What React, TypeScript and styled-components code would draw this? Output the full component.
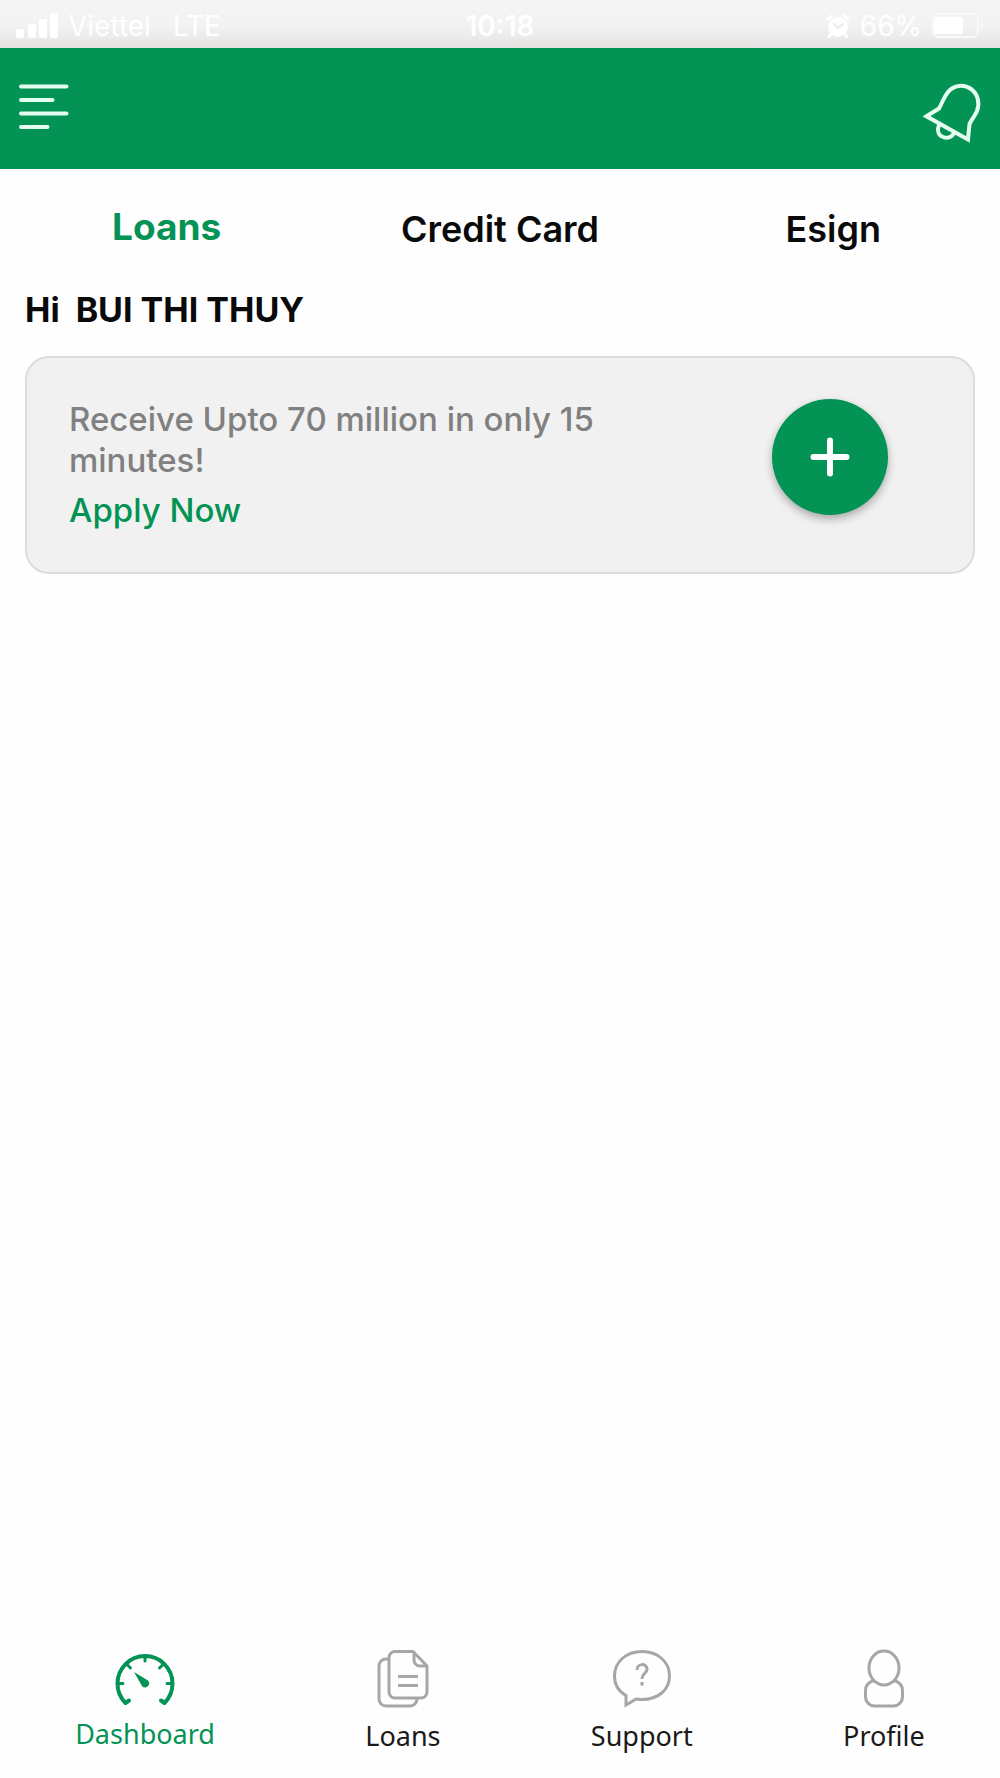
import React from "react";
import styled, { createGlobalStyle } from "styled-components";

const green = "#039355";

const GlobalStyle = createGlobalStyle`
  * { box-sizing: border-box; }
  body {
    margin: 0;
    background: #fefefe;
    font-family: Inter, "Liberation Sans", sans-serif;
  }
  button { font: inherit; border: 0; padding: 0; background: none; cursor: pointer; }
  a { text-decoration: none; }
  svg { display: block; flex: none; }
`;

const Screen = styled.div`
  display: flex;
  flex-direction: column;
  min-height: 100vh;
`;

const StatusBar = styled.div`
  display: grid;
  grid-template-columns: 1fr auto 1fr;
  align-items: center;
  height: 48px;
  padding: 4px 16px 0;
  background: linear-gradient(#f5f5f5 0%, #f2f2f2 55%, #e6e2e2 100%);
  color: #fff;
  font-size: 28px;
  line-height: 32px;
`;

const StatusGroup = styled.div<{ $end?: boolean }>`
  display: flex;
  align-items: center;
  gap: 10px;
  justify-content: ${(p) => (p.$end ? "flex-end" : "flex-start")};
`;

const Network = styled.span`
  padding-left: 12px;
`;

const Clock = styled.time`
  font-weight: 600;
`;

const Header = styled.header`
  display: flex;
  align-items: center;
  justify-content: space-between;
  height: 121px;
  padding: 0 12px;
  background: ${green};
`;

const Tabs = styled.nav`
  display: grid;
  grid-template-columns: repeat(3, 1fr);
  align-items: start;
  padding-top: 36px;
`;

const Tab = styled.a<{ $active?: boolean }>`
  text-align: center;
  line-height: ${(p) => (p.$active ? 44 : 48)}px;
  font-size: ${(p) => (p.$active ? 37 : 36)}px;
  font-weight: ${(p) => (p.$active ? 700 : 600)};
  color: ${(p) => (p.$active ? green : "#0a0a0a")};
`;

const Main = styled.main`
  flex: 1;
  padding: 37px 25px;
`;

const Greeting = styled.h1`
  display: flex;
  gap: 16px;
  margin: 0 0 26px;
  font-size: 34px;
  line-height: 40px;
  font-weight: 700;
  color: #0a0a0a;
`;

const Card = styled.section`
  display: flex;
  align-items: flex-start;
  justify-content: space-between;
  padding: 41px 85px 41px 42px;
  border: 2px solid #dcdcdc;
  border-radius: 24px;
  background: #f1f1f1;
  font-size: 33px;
  line-height: 41px;
  font-weight: 500;
`;

const Offer = styled.div`
  max-width: 560px;
`;

const OfferText = styled.p`
  margin: 0 0 9px;
  color: #808080;
`;

const ApplyLink = styled.a`
  display: block;
  color: ${green};
`;

const AddButton = styled.button`
  display: grid;
  place-items: center;
  width: 116px;
  height: 116px;
  border-radius: 50%;
  background: ${green};
  box-shadow: 0 4px 8px rgba(0, 0, 0, 0.3);
`;

const BottomNav = styled.nav`
  display: flex;
  justify-content: space-around;
  padding-bottom: 22px;
`;

const NavItem = styled.a<{ $active?: boolean }>`
  display: flex;
  flex-direction: column;
  align-items: center;
  gap: ${(p) => (p.$active ? 6 : 8)}px;
  font-family: "Noto Sans", "Open Sans", sans-serif;
  font-size: 27px;
  line-height: 40px;
  color: ${(p) => (p.$active ? green : "#1a1a1a")};
`;

const SignalIcon = () => (
  <svg width="42" height="26" viewBox="0 0 42 26" fill="#fff" aria-hidden="true">
    <rect x="0" y="16" width="8" height="9" rx="2" />
    <rect x="12" y="11" width="8" height="14" rx="2" />
    <rect x="23" y="6" width="8" height="19" rx="2" />
    <rect x="34" y="0" width="8" height="25" rx="2" />
  </svg>
);

const AlarmIcon = () => (
  <svg width="24" height="24" viewBox="0 0 24 24" aria-hidden="true">
    <circle cx="12" cy="13" r="10" fill="#fff" />
    <path d="M2 5l4-3M22 5l-4-3M5 20l-2 3M19 20l2 3" stroke="#fff" strokeWidth="3" strokeLinecap="round" />
    <path d="M8 10l4 4 5-4" fill="none" stroke="#ebe9e9" strokeWidth="2" strokeLinecap="round" />
  </svg>
);

const BatteryIcon = () => (
  <svg width="52" height="26" viewBox="0 0 52 26" aria-hidden="true">
    <rect x="1" y="1" width="45" height="23" rx="5" fill="none" stroke="#f9f9f9" strokeWidth="2" />
    <rect x="2" y="4" width="29" height="17" rx="2" fill="#fff" />
    <path d="M49 9q3 4 0 8z" fill="#f9f9f9" />
  </svg>
);

const MenuIcon = () => (
  <svg width="64" height="60" viewBox="0 0 64 60" stroke="#e3fdf1" strokeWidth="4" strokeLinecap="round" aria-hidden="true">
    <path d="M9 7.500h45.500M9 21h31.500M9 34.500h45.500M9 48h26.500" />
  </svg>
);

const BellIcon = () => (
  <svg width="72" height="72" viewBox="0 0 72 72" fill="none" stroke="#e3fdf1" strokeWidth="4" aria-hidden="true">
    <path d="M10.500 43.300L23 35.500C27 28 28 24 32 19C38 12 48 11 55 16C62 21 64 30 61 38C59 43 56 46 53.500 51L52 66.500Z" />
    <path d="M23 52c-2 5-1 10 4 12s9 0 11-4" />
  </svg>
);

const PlusIcon = () => (
  <svg width="44" height="44" viewBox="0 0 44 44" stroke="#fff" strokeWidth="6" strokeLinecap="round" aria-hidden="true">
    <path d="M22 5.500v33M5.500 22h33" />
  </svg>
);

const GaugeIcon = () => (
  <svg width="60" height="60" viewBox="0 0 60 60" fill="none" stroke={green} strokeWidth="4" strokeLinecap="round" strokeLinejoin="round" aria-hidden="true">
    <path d="M14 52.500L10.500 55A27.500 27.500 0 1 1 49.500 55L46 52.500" />
    <path d="M30 9v4M4 35.500h4M52 35.500h4M12.500 17l3 3M47.500 17l-3 3" strokeWidth="3" />
    <path d="M19 24L33 32.500A4 4 0 1 1 27 38Z" fill={green} stroke="none" />
  </svg>
);

const DocsIcon = () => (
  <svg width="60" height="60" viewBox="0 0 60 60" fill="none" stroke="#a6a6a6" strokeWidth="3" strokeLinejoin="round" aria-hidden="true">
    <path d="M15 11h-2a7 7 0 0 0-7 7v33a7 7 0 0 0 7 7h24a7 7 0 0 0 7-7" />
    <path d="M40 3.500H22a6 6 0 0 0-6 6V44a6 6 0 0 0 6 6h26a6 6 0 0 0 6-6V18Z" />
    <path d="M41 4v8a6 6 0 0 0 6 6h7" />
    <path d="M25 28.500h20M25 37.500h20" />
  </svg>
);

const SupportIcon = () => (
  <svg width="60" height="60" viewBox="0 0 60 60" fill="none" stroke="#a6a6a6" strokeWidth="3" aria-hidden="true">
    <path d="M14 57V47.500C6 43 2.500 36 2.500 28C2.500 14 14 3.500 30 3.500S57.500 14 57.500 28S46 51.500 30 51.500C28 51.500 26 51.300 24 51Z" />
    <path d="M25 22c0-7 10-7 10-1 0 5-5 4-5 10" />
    <path d="M30 34v3.500" />
  </svg>
);

const ProfileIcon = () => (
  <svg width="60" height="60" viewBox="0 0 60 60" fill="none" stroke="#a6a6a6" strokeWidth="3" aria-hidden="true">
    <ellipse cx="30" cy="20" rx="15" ry="17" />
    <path d="M20 32.500C14 34 11.500 38 11.500 43V49a9 9 0 0 0 9 9h19a9 9 0 0 0 9-9V43C48.500 38 46 34 40 32.500" />
  </svg>
);

const navItems = [
  { label: "Dashboard", Icon: GaugeIcon },
  { label: "Loans", Icon: DocsIcon },
  { label: "Support", Icon: SupportIcon },
  { label: "Profile", Icon: ProfileIcon },
];

export default function App() {
  return (
    <Screen>
      <GlobalStyle />
      <StatusBar>
        <StatusGroup>
          <SignalIcon />
          <span>Viettel</span>
          <Network>LTE</Network>
        </StatusGroup>
        <Clock>10:18</Clock>
        <StatusGroup $end>
          <AlarmIcon />
          <span>66%</span>
          <BatteryIcon />
        </StatusGroup>
      </StatusBar>
      <Header>
        <button aria-label="Menu"><MenuIcon /></button>
        <button aria-label="Notifications"><BellIcon /></button>
      </Header>
      <Tabs>
        <Tab href="#loans" $active>Loans</Tab>
        <Tab href="#credit-card">Credit Card</Tab>
        <Tab href="#esign">Esign</Tab>
      </Tabs>
      <Main>
        <Greeting>
          <span>Hi</span>
          <span>BUI THI THUY</span>
        </Greeting>
        <Card>
          <Offer>
            <OfferText>Receive Upto 70 million in only 15 minutes!</OfferText>
            <ApplyLink href="#apply">Apply Now</ApplyLink>
          </Offer>
          <AddButton aria-label="Apply for a loan"><PlusIcon /></AddButton>
        </Card>
      </Main>
      <BottomNav>
        {navItems.map(({ label, Icon }, index) => (
          <NavItem key={label} href={`#${label.toLowerCase()}`} $active={index === 0}>
            <Icon />
            {label}
          </NavItem>
        ))}
      </BottomNav>
    </Screen>
  );
}
